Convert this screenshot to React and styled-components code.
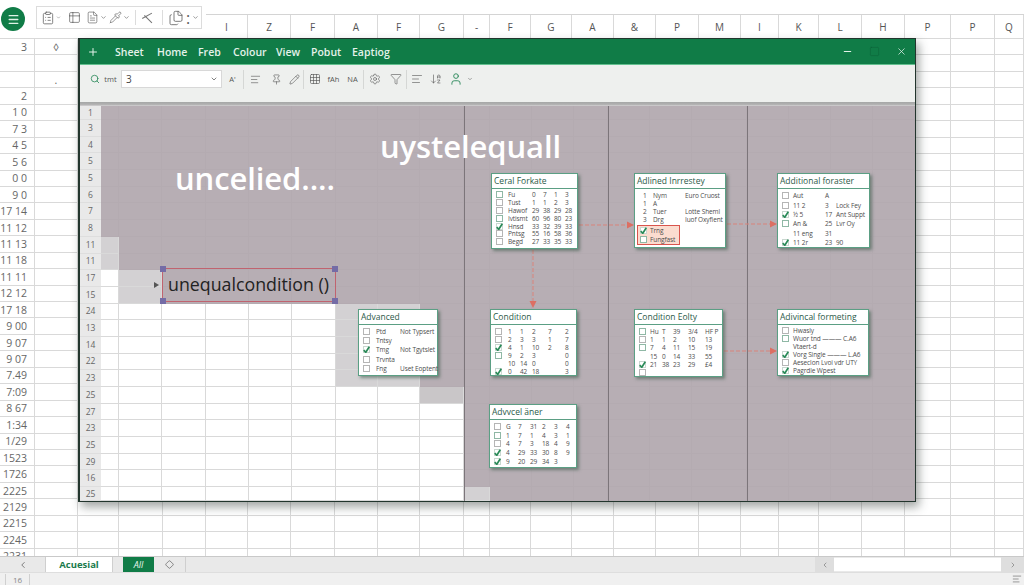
import styled, { createGlobalStyle } from 'styled-components'
import {
  AlignLeft, ArrowDownAZ, ChevronDown, ChevronLeft, ChevronRight, ClipboardList, Diamond, FileText, Files,
  Funnel, Grid3x3, Menu, Minus, Pencil, Pin, Pipette, Plus, Search, Settings, Square, Table2, User, X,
} from 'lucide-react'

const GREEN = '#107c47'
const MAUVE = '#b7aeb4'
const LINE = '#d9d9d9'

const GlobalStyle = createGlobalStyle`
  html, body { margin: 0; padding: 0; background: #fff; }
  body { font-family: "Open Sans", "Liberation Sans", sans-serif; }
`

const Page = styled.div`
  position: relative;
  width: 1024px;
  height: 585px;
  display: flex;
  flex-direction: column;
  overflow: hidden;
  background: #fff;
`

const TopRow = styled.div`
  height: 38px;
  display: flex;
  flex-shrink: 0;
`

const LeftTools = styled.div`
  width: 206px;
  flex-shrink: 0;
  display: flex;
  align-items: flex-start;
  gap: 11px;
  padding: 7px 0 0 1px;
  box-sizing: border-box;
`

const MenuCircle = styled.div`
  width: 24px;
  height: 24px;
  border-radius: 50%;
  background: ${GREEN};
  color: #dff3e7;
  display: flex;
  align-items: center;
  justify-content: center;
`

const QuickBar = styled.div`
  width: 166px;
  height: 23px;
  margin-top: -1px;
  border: 1px solid #dcdcdc;
  box-sizing: border-box;
  display: flex;
  align-items: center;
  padding-left: 4px;
  color: #5c5c5c;
`

const QuickGap = styled.span`
  display: inline-flex;
  align-items: center;
  width: ${({ $w }) => $w}px;
  flex-shrink: 0;
`

const QuickSep = styled.span`
  width: 1px;
  height: 15px;
  background: #dcdcdc;
  flex-shrink: 0;
  margin: 0 ${({ $m }) => $m}px;
`

const ColHeader = styled.div`
  flex: 1;
  align-self: flex-end;
  height: 24px;
  display: flex;
  border-top: 1px solid #d4d4d4;
  box-sizing: border-box;
`

const ColLetter = styled.div`
  flex-shrink: 0;
  border-right: 1px solid ${LINE};
  display: flex;
  align-items: center;
  justify-content: center;
  font-size: 10px;
  color: #555;
  box-sizing: border-box;
`

const SheetGrid = styled.div`
  flex: 1;
  overflow: hidden;
  min-height: 0;
`

const SheetRow = styled.div`
  height: 16.45px;
  display: flex;
`

const SheetCell = styled.div`
  flex-shrink: 0;
  box-sizing: border-box;
  border-right: 1px solid ${LINE};
  border-top: 1px solid ${LINE};
  display: flex;
  align-items: center;
  justify-content: ${({ $center }) => ($center ? 'center' : 'flex-end')};
  padding-right: ${({ $center }) => ($center ? 0 : 7)}px;
  font-size: 10.5px;
  color: #666;
  white-space: nowrap;
`

const TabBar = styled.div`
  height: 16px;
  flex-shrink: 0;
  display: flex;
  align-items: stretch;
  background: #e9e9e9;
  border-top: 1px solid #c9c9c9;
  box-sizing: border-box;
`

const TabArrow = styled.div`
  width: 45px;
  display: flex;
  align-items: center;
  justify-content: center;
  color: #666;
  border-right: 1px solid #cfcfcf;
`

const ActiveTab = styled.div`
  width: 66px;
  background: #fff;
  color: #1b7a4c;
  font-size: 9.5px;
  font-weight: 700;
  display: flex;
  align-items: center;
  justify-content: center;
  border-right: 1px solid #cfcfcf;
`

const AllTab = styled.div`
  width: 31px;
  margin-left: 10px;
  background: ${GREEN};
  color: #e6f5ec;
  font-size: 9px;
  font-style: italic;
  display: flex;
  align-items: center;
  justify-content: center;
`

const AddTab = styled.div`
  width: 31px;
  display: flex;
  align-items: center;
  justify-content: center;
  color: #666;
  border-right: 1px solid #cfcfcf;
`

const ScrollTrack = styled.div`
  margin-left: auto;
  width: 209px;
  display: flex;
  align-items: stretch;
  color: #777;
`

const ScrollEnd = styled.div`
  width: ${({ $w }) => $w}px;
  display: flex;
  align-items: center;
  justify-content: center;
  background: #dedede;
`

const ScrollThumb = styled.div`
  flex: 1;
  background: #fff;
  margin: 1px 0;
`

const StatusBar = styled.div`
  height: 13px;
  flex-shrink: 0;
  background: #f0f0f0;
  border-top: 1px solid #dedede;
  box-sizing: border-box;
  display: flex;
  align-items: center;
  justify-content: space-between;
  color: #888;
  font-size: 8px;
  padding: 0 2px 0 5px;
`

const ZoomBox = styled.div`
  width: 23px;
  text-align: center;
  border-left: 1px solid #d0d0d0;
  border-right: 1px solid #d0d0d0;
`

const Window = styled.div`
  position: absolute;
  left: 78px;
  top: 38px;
  width: 838px;
  height: 464px;
  display: flex;
  flex-direction: column;
  border: 1px solid #22352d;
  border-left-width: 2px;
  box-sizing: border-box;
  box-shadow: 3px 5px 9px rgba(50, 60, 55, 0.45);
  background: #fff;
`

const TitleBar = styled.div`
  height: 26px;
  flex-shrink: 0;
  background: ${GREEN};
  border-bottom: 1px solid #63c08f;
  display: flex;
  align-items: center;
  color: #e4f2ea;
  box-sizing: border-box;
`

const PlusSlot = styled.div`
  width: 35px;
  padding-left: 7px;
  box-sizing: border-box;
  display: flex;
`

const MenuItem = styled.span`
  width: ${({ $w }) => $w}px;
  font-size: 10.5px;
  font-weight: 600;
  white-space: nowrap;
`

const WinControls = styled.div`
  margin-left: auto;
  display: flex;
  align-items: center;
  gap: 16px;
  padding-right: 8px;
`

const Ribbon = styled.div`
  height: 37px;
  flex-shrink: 0;
  background: #eef0ee;
  display: flex;
  align-items: flex-start;
  padding: 5px 0 0 9px;
  box-sizing: border-box;
  color: #555;
`

const RibbonSlot = styled.span`
  width: ${({ $w }) => $w}px;
  height: 18px;
  flex-shrink: 0;
  display: inline-flex;
  align-items: center;
  justify-content: center;
  font-size: 7.5px;
  color: ${({ $green }) => ($green ? '#2d8a5c' : '#555')};
`

const RibbonSep = styled.span`
  width: 1px;
  height: 19px;
  flex-shrink: 0;
  background: #d5d7d5;
`

const FontInput = styled.div`
  width: 101px;
  height: 18px;
  flex-shrink: 0;
  background: #fff;
  border: 1px solid #d8d8d8;
  box-sizing: border-box;
  display: flex;
  align-items: center;
  justify-content: space-between;
  padding: 0 3px 0 4px;
  font-size: 10px;
  color: #444;
`

const RibbonEdge = styled.div`
  height: 4px;
  flex-shrink: 0;
  background: linear-gradient(#a5a7a6, #b1b1b1 60%, #d4d2d4);
`

const Body = styled.div`
  flex: 1;
  min-height: 0;
  display: flex;
`

const RowNums = styled.div`
  width: 21px;
  flex-shrink: 0;
  display: grid;
  grid-template-rows: 14px repeat(22, 16.7px) 14px;
  background: #e9e9e9;
`

const RowNum = styled.div`
  display: flex;
  align-items: center;
  justify-content: center;
  font-size: 8.5px;
  line-height: 10px;
  color: #666;
  border-bottom: 1px solid #dedede;
  box-sizing: border-box;
`

const Canvas = styled.div`
  position: relative;
  flex: 1;
  display: grid;
  grid-template-columns: ${({ $cols }) => $cols};
  grid-template-rows: 14px repeat(22, 16.7px) 14px;
  overflow: hidden;
`

const toneBg = { mauve: MAUVE, light: '#d3d1d3', white: '#fff', pale: '#c9c6c8' }

const Cell = styled.div`
  background: ${({ $tone }) => toneBg[$tone]};
  box-sizing: border-box;
  border-right: 1px solid ${({ $tone }) => ($tone === 'mauve' ? '#b4abb1' : LINE)};
  border-bottom: 1px solid ${({ $tone }) => ($tone === 'mauve' ? '#b4abb1' : LINE)};
`

const Divider = styled.div`
  position: absolute;
  top: 0;
  bottom: 0;
  left: ${({ $x }) => $x}px;
  width: 1px;
  background: #7c757a;
`

const BigTitle = styled.div`
  position: absolute;
  left: ${({ $x }) => $x}px;
  top: ${({ $y }) => $y}px;
  font-size: 31px;
  line-height: 40px;
  font-weight: 600;
  letter-spacing: -0.1px;
  color: #fff;
  white-space: nowrap;
`

const SelectedBox = styled.div`
  position: absolute;
  left: 61px;
  top: 162px;
  width: 174px;
  height: 34px;
  border: 1.5px solid #c0636f;
  box-sizing: border-box;
  display: flex;
  align-items: center;
  padding: 0 0 3px 5px;
  font-size: 17.8px;
  color: #222;
  white-space: nowrap;
`

const Handle = styled.span`
  position: absolute;
  width: 6px;
  height: 6px;
  background: #746ca6;
  left: ${({ $right }) => ($right ? 'auto' : '-3px')};
  right: ${({ $right }) => ($right ? '-3px' : 'auto')};
  top: ${({ $bottom }) => ($bottom ? 'auto' : '-3px')};
  bottom: ${({ $bottom }) => ($bottom ? '-3px' : 'auto')};
`

const Pointer = styled.span`
  position: absolute;
  left: -9px;
  top: 13px;
  width: 0;
  height: 0;
  border-left: 5px solid #555;
  border-top: 3px solid transparent;
  border-bottom: 3px solid transparent;
`

const Connectors = styled.svg`
  position: absolute;
  left: 0;
  top: 0;
  pointer-events: none;
`

const CardBox = styled.div`
  position: absolute;
  left: ${({ $x }) => $x}px;
  top: ${({ $y }) => $y}px;
  width: ${({ $w }) => $w}px;
  height: ${({ $h }) => $h}px;
  box-sizing: border-box;
  background: #fff;
  border: 1px solid #5b9f84;
  box-shadow: 2px 2px 3px rgba(55, 85, 70, 0.55);
`

const CardTitle = styled.div`
  height: 14px;
  line-height: 14px;
  padding-left: 2px;
  font-size: 8.5px;
  font-weight: 500;
  color: #2c5a49;
  border-bottom: 1px solid #5b9f84;
  white-space: nowrap;
`

const CardGrid = styled.div`
  display: grid;
  grid-template-columns: ${({ $cols }) => $cols};
  grid-auto-rows: ${({ $row }) => $row}px;
  padding: 2px 0 0 ${({ $pad }) => $pad ?? 4}px;
  align-items: center;
`

const CardText = styled.span`
  font-size: 6.5px;
  line-height: 7px;
  letter-spacing: -0.1px;
  color: #4d4d4d;
  white-space: nowrap;
`

const CheckBox = styled.span`
  width: 7px;
  height: 7px;
  box-sizing: border-box;
  display: inline-block;
  position: relative;
  border: 1px solid ${({ $kind }) => ($kind === 'empty' ? '#b5b5b5' : $kind === 'light' ? '#8fb8a5' : '#c9d8d0')};
  background: #fff;
`

const CheckMark = styled.svg`
  position: absolute;
  left: -1px;
  top: -1px;
  width: 7px;
  height: 7px;
`

const HotBlock = styled.div`
  margin: 2px 0 0 2px;
  width: 43px;
  border: 1px solid #d9544d;
  background: #fbdccf;
  box-sizing: border-box;
`

const HotGrid = styled(CardGrid)`
  padding: 0 0 0 2px;
`

// column edges of the sheet behind the window
const colEdges = [0, 35, 78, 119, 163, 206, 248, 291, 335, 378, 420, 464, 490, 531, 572, 614, 656, 699, 741, 779, 819, 862, 905, 951, 995, 1024]
const letters = ['I', 'Z', 'F', 'A', 'F', 'G', '-', 'F', 'G', 'A', '&', 'P', 'M', 'I', 'K', 'L', 'H', 'P', 'P', 'Q']
const rowLabels = ['3', '', '', '2', '1 0', '7 3', '4 5', '5 6', '0 0', '9 0', '17 14', '11 12', '11 13', '11 18', '11 11', '12 12', '17 18', '9 00', '9 07', '9 07', '7.49', '7:09', '8 67', '1:34', '1/29', '1523', '1726', '2225', '2129', '2215', '2245', '2231']
const secondCol = { 0: '◊', 2: '.' }
const winRows = ['1', '3', '4', '5', '5', '6', '7', '8', '11', '11', '17', '15', '24', '13', '14', '22', '23', '25', '27', '23', '25', '29', '16', '25']
const canvasCols = [18, 43, 44, 43, 43, 44, 42, 42, 44, 26, 42, 42, 34, 42, 42, 55, 42, 42, 42, 42]

const menu = [['Sheet', 42], ['Home', 41], ['Freb', 35], ['Colour', 43], ['View', 35], ['Pobut', 41], ['Eaptiog', 50]]
const tickKinds = ['empty', 'light', 'check']

function toneFor(r, c) {
  if (r < 8) return 'mauve'
  if (r < 10) return c === 0 ? 'light' : 'mauve'
  if (r < 12) {
    if (c === 0) return 'white'
    return c === 1 ? 'light' : 'mauve'
  }
  if (r < 17) {
    if (c < 6) return 'white'
    return c < 8 ? 'light' : 'mauve'
  }
  if (r === 17) {
    if (c < 8) return 'white'
    return c === 8 ? 'pale' : 'mauve'
  }
  if (c < 9) return 'white'
  if (r === 23 && c === 9) return 'light'
  return 'mauve'
}

const cards = [
  {
    title: 'Ceral Forkate', x: 390, y: 67, w: 87, h: 76, cols: '12px 24px repeat(4, 11px)', row: 7.8,
    rows: [
      ['light', 'Fu', '0', '7', '1', '3'], ['empty', 'Tust', '1', '1', '2', '3'], ['empty', 'Hawof', '29', '38', '29', '28'],
      ['light', 'Ivtismt', '60', '96', '80', '23'], ['check', 'Hnsd', '33', '32', '39', '33'], ['empty', 'Pntsg', '55', '16', '58', '36'],
      ['empty', 'Begd', '27', '33', '35', '33'],
    ],
  },
  {
    title: 'Adlined Inrrestey', x: 533, y: 67, w: 92, h: 75, cols: '10px 32px 1fr', row: 8, pad: 8,
    rows: [
      ['1', 'Nym', 'Euro Cruost'], ['1', 'A', ''], ['2', 'Tuer', 'Lotte Sheml'], ['3', 'Drg', 'Iuof Oxyfient'],
    ],
    hot: [['check', 'Trng'], ['light', 'Fungfast']],
  },
  {
    title: 'Additional foraster', x: 676, y: 67, w: 93, h: 75, cols: '11px 32px 11px 1fr', row: 9.4,
    rows: [
      ['empty', 'Aut', 'A', ''], ['empty', '11 2', '3', 'Lock Fey'], ['check', '½ 5', '17', 'Ant Suppt'],
      ['light', 'An &', '25', 'Lvr Oy'], [null, '11 eng', '31', ''], ['check', '11 2r', '23', '90'],
    ],
  },
  {
    title: 'Advanced', x: 257, y: 203, w: 80, h: 67, cols: '13px 24px 1fr', row: 9.2,
    rows: [
      ['empty', 'Ptd', 'Not Typsert'], ['empty', 'Tntsy', ''], ['check', 'Tmg', 'Not Tgytslet'], ['empty', 'Trvnta', ''], ['empty', 'Fng', 'Uset Eoptent'],
    ],
  },
  {
    title: 'Condition', x: 389, y: 203, w: 87, h: 67, cols: '13px 12px 12px 16px 17px 1fr', row: 8,
    rows: [
      ['empty', '1', '1', '2', '7', '2'], ['empty', '2', '3', '3', '1', '7'], ['check', '4', '1', '10', '2', '8'],
      ['light', '9', '2', '3', '', '0'], [null, '10', '14', '0', '', '0'], ['check', '0', '42', '18', '', '3'],
    ],
  },
  {
    title: 'Condition Eolty', x: 533, y: 203, w: 89, h: 68, cols: '11px 12px 11px 15px 17px 1fr', row: 8.3,
    rows: [
      ['light', 'Hu', 'T', '39', '3/4', 'HF P'], ['empty', '1', '1', '2', '10', '13'], ['light', '7', '4', '11', '15', '19'],
      [null, '15', '0', '14', '33', '55'], ['check', '21', '38', '23', '29', '£4'], ['empty', '', '', '', '', ''],
    ],
  },
  {
    title: 'Adivincal formeting', x: 676, y: 203, w: 92, h: 67, cols: '11px 1fr', row: 7.9,
    rows: [
      ['empty', 'Hwasly'], ['light', 'Wuor tnd ——— C.A6'], [null, 'Vtaert-d'], ['check', 'Vorg Single ——— L.A6'],
      ['empty', 'Aeseclon Lvoi vdr UTY'], ['check', 'Pagrdle Wpest'],
    ],
  },
  {
    title: 'Advvcel äner', x: 388, y: 298, w: 88, h: 64, cols: '12px repeat(6, 12px)', row: 8.7,
    rows: [
      ['empty', 'G', '7', '31', '2', '3', '4'], ['light', '1', '7', '1', '4', '3', '1'], ['empty', '4', '7', '3', '18', '4', '9'],
      ['check', '4', '29', '33', '30', '8', '9'], ['check', '9', '20', '29', '34', '3', ''],
    ],
  },
]

function TickBox({ kind }) {
  if (!kind) return <span />
  return (
    <CheckBox $kind={kind}>
      {kind === 'check' && (
        <CheckMark viewBox="0 0 10 10">
          <path d="M1 6 L4 9 L9 1" fill="none" stroke="#2a8a58" strokeWidth="2.4" />
        </CheckMark>
      )}
    </CheckBox>
  )
}

function Card({ card }) {
  return (
    <CardBox $x={card.x} $y={card.y} $w={card.w} $h={card.h}>
      <CardTitle>{card.title}</CardTitle>
      <CardGrid $cols={card.cols} $row={card.row} $pad={card.pad}>
        {card.rows.map((row, r) =>
          row.map((v, c) =>
            c === 0 && (v === null || tickKinds.includes(v))
              ? <TickBox key={`${r}-${c}`} kind={v} />
              : <CardText key={`${r}-${c}`}>{v}</CardText>
          )
        )}
      </CardGrid>
      {card.hot && (
        <HotBlock>
          <HotGrid $cols="10px 1fr" $row={9} $pad={2}>
            {card.hot.map(([kind, text]) => [
              <TickBox key={`${text}-box`} kind={kind} />,
              <CardText key={text}>{text}</CardText>,
            ])}
          </HotGrid>
        </HotBlock>
      )}
    </CardBox>
  )
}

function Arrow({ d, tip }) {
  return (
    <>
      <path d={d} fill="none" stroke="#d9837a" strokeWidth="1" strokeDasharray="4 2" />
      <path d={tip} fill="#dc6f63" />
    </>
  )
}

export default function App() {
  const cols = canvasCols.map(w => `${w}px`).join(' ')

  return (
    <Page>
      <GlobalStyle />
      <TopRow>
        <LeftTools>
          <MenuCircle><Menu size={13} strokeWidth={2.4} /></MenuCircle>
          <QuickBar>
            <QuickGap $w={15}><ClipboardList size={14} strokeWidth={1.3} /></QuickGap>
            <QuickGap $w={12}><ChevronDown size={5} /></QuickGap>
            <QuickGap $w={18}><Table2 size={13} strokeWidth={1.3} /></QuickGap>
            <QuickGap $w={14}><FileText size={13} strokeWidth={1.2} /></QuickGap>
            <QuickGap $w={9}><ChevronDown size={7} /></QuickGap>
            <QuickGap $w={14}><Pipette size={13} strokeWidth={1.2} /></QuickGap>
            <QuickGap $w={9}><ChevronDown size={7} /></QuickGap>
            <QuickSep $m={3} />
            <QuickGap $w={18}>
              <svg width="14" height="14" viewBox="0 0 13 13">
                <path d="M12 2 L3 7 M5 4 L12 11" fill="none" stroke="#777" strokeWidth="1" />
              </svg>
            </QuickGap>
            <QuickSep $m={5} />
            <QuickGap $w={18}><Files size={16} strokeWidth={1.2} /></QuickGap>
            <QuickGap $w={6}>:</QuickGap>
            <ChevronDown size={7} />
          </QuickBar>
        </LeftTools>
        <ColHeader>
          {letters.map((l, i) => (
            <ColLetter key={i} style={{ width: colEdges[i + 6] - colEdges[i + 5] }}>{l}</ColLetter>
          ))}
        </ColHeader>
      </TopRow>

      <SheetGrid>
        {rowLabels.map((label, r) => (
          <SheetRow key={r}>
            {colEdges.slice(1).map((edge, c) => (
              <SheetCell key={c} $center={c === 1} style={{ width: edge - colEdges[c] }}>
                {c === 0 ? label : c === 1 ? secondCol[r] : ''}
              </SheetCell>
            ))}
          </SheetRow>
        ))}
      </SheetGrid>

      <TabBar>
        <TabArrow><ChevronLeft size={10} /></TabArrow>
        <ActiveTab>Acuesial</ActiveTab>
        <AllTab>All</AllTab>
        <AddTab><Diamond size={9} /></AddTab>
        <ScrollTrack>
          <ScrollEnd $w={19}><ChevronLeft size={8} /></ScrollEnd>
          <ScrollThumb />
          <ScrollEnd $w={23}><ChevronRight size={8} /></ScrollEnd>
        </ScrollTrack>
      </TabBar>
      <StatusBar>
        <ZoomBox>16</ZoomBox>
        <AlignLeft size={10} />
      </StatusBar>

      <Window>
        <TitleBar>
          <PlusSlot><Plus size={12} strokeWidth={2} /></PlusSlot>
          {menu.map(([name, w]) => <MenuItem key={name} $w={w}>{name}</MenuItem>)}
          <WinControls>
            <Minus size={11} strokeWidth={2.4} />
            <Square size={11} strokeWidth={1} color="#0b5f37" />
            <X size={11} strokeWidth={1.6} />
          </WinControls>
        </TitleBar>
        <Ribbon>
          <RibbonSlot $w={11} $green><Search size={10} strokeWidth={2} /></RibbonSlot>
          <RibbonSlot $w={21}>tmt</RibbonSlot>
          <FontInput>3<ChevronDown size={8} /></FontInput>
          <RibbonSlot $w={21}>A'</RibbonSlot>
          <RibbonSep />
          <RibbonSlot $w={23}><AlignLeft size={11} strokeWidth={1.3} /></RibbonSlot>
          <RibbonSlot $w={18}><Pin size={11} strokeWidth={1.3} /></RibbonSlot>
          <RibbonSlot $w={18}><Pencil size={11} strokeWidth={1.3} /></RibbonSlot>
          <RibbonSep />
          <RibbonSlot $w={21}><Grid3x3 size={12} strokeWidth={1.3} /></RibbonSlot>
          <RibbonSlot $w={17}>fAh</RibbonSlot>
          <RibbonSlot $w={21}>NA</RibbonSlot>
          <RibbonSep />
          <RibbonSlot $w={22}><Settings size={12} strokeWidth={1.2} /></RibbonSlot>
          <RibbonSlot $w={20}><Funnel size={12} strokeWidth={1.2} /></RibbonSlot>
          <RibbonSep />
          <RibbonSlot $w={20}><AlignLeft size={12} strokeWidth={1.2} /></RibbonSlot>
          <RibbonSlot $w={17}><ArrowDownAZ size={12} strokeWidth={1.2} /></RibbonSlot>
          <RibbonSlot $w={23} $green><User size={14} strokeWidth={1.6} /></RibbonSlot>
          <RibbonSlot $w={6}><ChevronDown size={6} /></RibbonSlot>
        </Ribbon>
        <RibbonEdge />
        <Body>
          <RowNums>
            {winRows.map((n, i) => <RowNum key={i}>{n}</RowNum>)}
          </RowNums>
          <Canvas $cols={cols}>
            {winRows.map((_, r) =>
              canvasCols.map((__, c) => <Cell key={`${r}-${c}`} $tone={toneFor(r, c)} />)
            )}
            <Divider $x={363} />
            <Divider $x={507} />
            <Divider $x={646} />
            <BigTitle $x={74} $y={52}>uncelied....</BigTitle>
            <BigTitle $x={279} $y={20}>uystelequall</BigTitle>
            <SelectedBox>
              <Pointer />
              unequalcondition ()
              <Handle />
              <Handle $right />
              <Handle $bottom />
              <Handle $right $bottom />
            </SelectedBox>
            <Connectors width="814" height="395">
              <Arrow d="M478 119 H527" tip="M533 119 L526 115.5 V122.5 Z" />
              <Arrow d="M626 118 H670" tip="M676 118 L669 114.5 V121.5 Z" />
              <Arrow d="M432 144 V196" tip="M432 202 L428.5 195 H435.5 Z" />
              <Arrow d="M623 245 H670" tip="M676 245 L669 241.5 V248.5 Z" />
            </Connectors>
            {cards.map(card => <Card key={card.title} card={card} />)}
          </Canvas>
        </Body>
      </Window>
    </Page>
  )
}
